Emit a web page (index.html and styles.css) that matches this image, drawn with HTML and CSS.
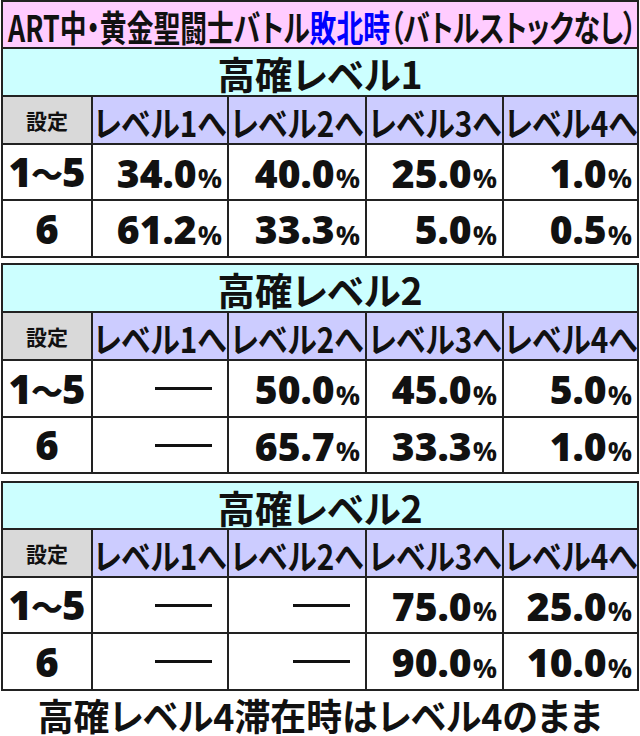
FILE: index.html
```html
<!DOCTYPE html>
<html lang="ja">
<head>
<meta charset="utf-8">
<title>ART中・黄金聖闘士バトル敗北時</title>
<link rel="stylesheet" href="styles.css">
</head>
<body>
<div class="page">
  <div class="tbl tbl-first">
    <div class="cell span title"><span class="title-text">ART中・黄金聖闘士バトル<span class="blue">敗北時</span>（バトルストックなし）</span></div>
    <div class="cell span level"><span class="level-text">高確レベル1</span></div>
    <div class="cell setting">設定</div>
    <div class="cell head"><span class="head-text">レベル1へ</span></div>
    <div class="cell head"><span class="head-text">レベル2へ</span></div>
    <div class="cell head"><span class="head-text">レベル3へ</span></div>
    <div class="cell head"><span class="head-text">レベル4へ</span></div>
    <div class="cell set">1<span class="wave">〜</span>5</div>
    <div class="cell val">34.0<span class="pct">%</span></div>
    <div class="cell val">40.0<span class="pct">%</span></div>
    <div class="cell val">25.0<span class="pct">%</span></div>
    <div class="cell val">1.0<span class="pct">%</span></div>
    <div class="cell set">6</div>
    <div class="cell val">61.2<span class="pct">%</span></div>
    <div class="cell val">33.3<span class="pct">%</span></div>
    <div class="cell val">5.0<span class="pct">%</span></div>
    <div class="cell val">0.5<span class="pct">%</span></div>
  </div>

  <div class="tbl tbl-second">
    <div class="cell span level"><span class="level-text">高確レベル2</span></div>
    <div class="cell setting">設定</div>
    <div class="cell head"><span class="head-text">レベル1へ</span></div>
    <div class="cell head"><span class="head-text">レベル2へ</span></div>
    <div class="cell head"><span class="head-text">レベル3へ</span></div>
    <div class="cell head"><span class="head-text">レベル4へ</span></div>
    <div class="cell set">1<span class="wave">〜</span>5</div>
    <div class="cell val"><span class="dash"></span></div>
    <div class="cell val">50.0<span class="pct">%</span></div>
    <div class="cell val">45.0<span class="pct">%</span></div>
    <div class="cell val">5.0<span class="pct">%</span></div>
    <div class="cell set">6</div>
    <div class="cell val"><span class="dash"></span></div>
    <div class="cell val">65.7<span class="pct">%</span></div>
    <div class="cell val">33.3<span class="pct">%</span></div>
    <div class="cell val">1.0<span class="pct">%</span></div>
  </div>

  <div class="tbl tbl-third">
    <div class="cell span level"><span class="level-text">高確レベル2</span></div>
    <div class="cell setting">設定</div>
    <div class="cell head"><span class="head-text">レベル1へ</span></div>
    <div class="cell head"><span class="head-text">レベル2へ</span></div>
    <div class="cell head"><span class="head-text">レベル3へ</span></div>
    <div class="cell head"><span class="head-text">レベル4へ</span></div>
    <div class="cell set">1<span class="wave">〜</span>5</div>
    <div class="cell val"><span class="dash"></span></div>
    <div class="cell val"><span class="dash"></span></div>
    <div class="cell val">75.0<span class="pct">%</span></div>
    <div class="cell val">25.0<span class="pct">%</span></div>
    <div class="cell set">6</div>
    <div class="cell val"><span class="dash"></span></div>
    <div class="cell val"><span class="dash"></span></div>
    <div class="cell val">90.0<span class="pct">%</span></div>
    <div class="cell val">10.0<span class="pct">%</span></div>
  </div>

  <div class="note"><span class="note-text">高確レベル4滞在時はレベル4のまま</span></div>
</div>
</body>
</html>
```

FILE: styles.css
```css
html, body {
  margin: 0;
  padding: 0;
  background: #ffffff;
}

body {
  width: 640px;
  font-family: "Noto Sans CJK JP", sans-serif;
  font-weight: 700;
  font-feature-settings: "palt";
  color: #111111;
}

.page {
  display: flex;
  flex-direction: column;
  padding-left: 1px;
}

.tbl {
  display: grid;
  width: 638px;
  box-sizing: border-box;
  grid-template-columns: 88px 134px 136px 135px 133px;
  gap: 2px;
  padding: 2px;
  background: #222222;
}

.tbl-first {
  grid-template-rows: 45px 46px 46px 54px 55px;
}

.tbl-second {
  margin-top: 5px;
  grid-template-rows: 46px 46px 55px 54px;
}

.tbl-third {
  margin-top: 7px;
  grid-template-rows: 45px 46px 54px 55px;
}

.cell {
  background: #ffffff;
  display: flex;
  align-items: center;
  justify-content: center;
  white-space: nowrap;
  min-width: 0;
}

.span {
  grid-column: 1 / -1;
}

.title {
  background: #ffccff;
  justify-content: flex-start;
  padding-left: 5px;
}

.title-text {
  display: inline-block;
  flex-shrink: 0;
  font-size: 36px;
  line-height: 1;
  transform: scaleX(0.744);
  transform-origin: left center;
  margin-top: 2px;
}

.blue {
  color: #0000ff;
}

.level {
  background: #ccffff;
}

.level-text {
  display: inline-block;
  flex-shrink: 0;
  font-size: 38px;
  line-height: 1;
  transform: scaleX(0.985);
  margin-top: 2px;
}

.setting {
  background: #d9d9d9;
  font-size: 21px;
  line-height: 1;
}

.head {
  background: #ccccff;
}

.head-text {
  display: inline-block;
  flex-shrink: 0;
  font-size: 35px;
  line-height: 1;
  transform: scaleX(0.85);
  margin-top: 2px;
}

.set {
  font-family: "Open Sans", "Noto Sans CJK JP", sans-serif;
  font-weight: 800;
  font-size: 40px;
  line-height: 1;
}

.wave {
  font-family: "Noto Sans CJK JP", sans-serif;
  font-size: 32px;
  margin: 0 -1px;
}

.val {
  justify-content: flex-end;
  padding-right: 5px;
  font-family: "Open Sans", "Noto Sans CJK JP", sans-serif;
  font-weight: 800;
  font-size: 39px;
  line-height: 1;
}

.pct {
  font-weight: 700;
  font-size: 27px;
  margin-left: 1px;
  padding-top: 11px;
}

.dash {
  display: inline-block;
  width: 57px;
  height: 3px;
  background: #111111;
  margin-right: 10px;
}

.note {
  height: 45px;
  display: flex;
  align-items: center;
  justify-content: center;
}

.note-text {
  display: inline-block;
  font-size: 37px;
  line-height: 1;
  transform: scaleX(0.97);
  margin-top: 4px;
}
```
